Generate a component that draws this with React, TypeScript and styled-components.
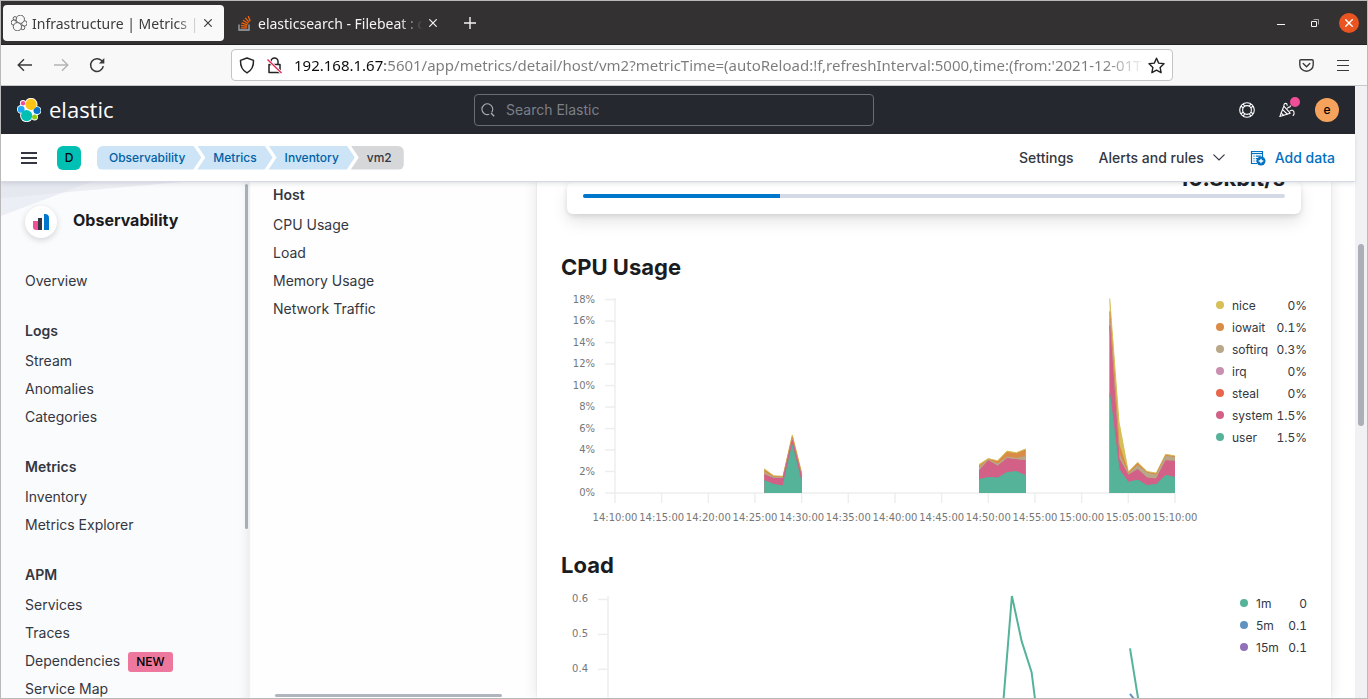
import React, { useLayoutEffect, useRef, useState } from "react";
import styled, { createGlobalStyle, css } from "styled-components";

const ui = `"Noto Sans", "Open Sans", sans-serif`;
const inter = `Inter, "Liberation Sans", sans-serif`;

const GlobalStyle = createGlobalStyle`
  * { box-sizing: border-box; }
  body { margin: 0; font-family: ${inter}; font-size: 14px; color: #343741; background: #fff; }
  button { font: inherit; color: inherit; background: none; border: 0; padding: 0; cursor: pointer; }
  a { color: inherit; text-decoration: none; }
  ul, h1, h2, h3 { margin: 0; padding: 0; list-style: none; }
  svg { display: block; flex: none; }
`;

/* ---------- browser window ---------- */

const Window = styled.div`
  display: flex;
  flex-direction: column;
  height: 100vh;
  border: 1px solid #b9b9b9;
  overflow: hidden;
`;

const TabStrip = styled.div`
  display: flex;
  align-items: center;
  flex: none;
  height: 44px;
  padding: 0 8px 0 2px;
  background: #333132;
  border-bottom: 1px solid #222;
  color: #f4f4f4;
`;

const Tab = styled.div<{ $active?: boolean }>`
  display: flex;
  align-items: center;
  gap: ${(p) => (p.$active ? 5 : 7)}px;
  width: ${(p) => (p.$active ? 221 : 225)}px;
  height: 36px;
  padding: 0 8px;
  border-radius: 4px;
  font-family: ${ui};
  font-size: 14px;
  ${(p) =>
    p.$active
      ? css`
          background: #f9f9f9;
          color: #3c3c3c;
        `
      : css`
          padding: 0 8px 0 14px;
        `}
`;

const TabTitle = styled.span`
  flex: 1;
  min-width: 0;
  padding-top: 2px;
  overflow: hidden;
  white-space: nowrap;
  mask-image: linear-gradient(to right, #000 calc(100% - 24px), transparent);
`;

const TabClose = styled.button`
  display: grid;
  place-items: center;
  width: 16px;
  height: 16px;
  margin-left: -5px;
`;

const NewTab = styled.button`
  margin-left: 15px;
`;

const WindowControls = styled.div`
  display: flex;
  align-items: center;
  gap: 26px;
  margin-left: auto;
`;

const CloseWindow = styled.button`
  display: grid;
  place-items: center;
  width: 20px;
  height: 20px;
  margin-left: -6px;
  border-radius: 50%;
  background: #e95420;
  color: #fff;
`;

const Toolbar = styled.div`
  display: flex;
  align-items: center;
  flex: none;
  height: 41px;
  padding: 0 18px 0 16px;
  background: #f8f8f8;
  border-bottom: 1px solid #c8c8c8;
  color: #3a3a3a;
`;

const ToolbarGroup = styled.div<{ $width: number; $gap: number; $end?: boolean }>`
  display: flex;
  align-items: center;
  justify-content: ${(p) => (p.$end ? "flex-end" : "flex-start")};
  gap: ${(p) => p.$gap}px;
  width: ${(p) => p.$width}px;
`;

const AddressBar = styled.div`
  display: flex;
  align-items: center;
  flex: 1;
  min-width: 0;
  height: 32px;
  padding: 0 7px;
  gap: 11px;
  background: #fff;
  border: 1px solid #c4c4c4;
  border-radius: 4px;
  color: #222;
`;

const AddressInput = styled.input`
  flex: 1;
  min-width: 0;
  height: 28px;
  margin-right: -8px;
  padding: 0;
  border: 0;
  outline: 0;
  font-family: ${ui};
  font-size: 15px;
  color: #7b7b7b;
  -webkit-text-fill-color: transparent;
  background: linear-gradient(to right, #0c0c0c 91px, #7b7b7b 91px);
  background-clip: text;
  -webkit-background-clip: text;
  mask-image: linear-gradient(to right, #000 calc(100% - 40px), transparent);
`;

const Viewport = styled.div`
  display: flex;
  flex: 1;
  min-height: 0;
`;

const PageScrollbar = styled.div`
  display: flex;
  justify-content: center;
  flex: none;
  width: 12px;
  padding-top: 158px;
  background: #f1f1f4;
`;

const PageThumb = styled.div`
  width: 6px;
  height: 182px;
  border-radius: 3px;
  background: #acaeb8;
`;

/* ---------- elastic chrome ---------- */

const Page = styled.div`
  display: flex;
  flex-direction: column;
  flex: 1;
  min-width: 0;
`;

const Header = styled.header`
  display: grid;
  grid-template-columns: 1fr 400px 1fr;
  align-items: center;
  flex: none;
  height: 48px;
  padding: 0 16px 0 8px;
  background: #25282f;
  color: #fff;
`;

const Brand = styled.a`
  display: flex;
  align-items: center;
  gap: 8px;
  margin-left: 8px;
  font-family: "Open Sans", "Noto Sans", sans-serif;
  font-size: 22px;
  line-height: 24px;

  span { padding-bottom: 2px; line-height: 22px; }
`;

const Search = styled.label`
  display: flex;
  align-items: center;
  gap: 11px;
  height: 32px;
  padding: 0 6px;
  border: 1px solid #6a6c72;
  border-radius: 4px;
  color: #a9abb1;

  input {
    flex: 1;
    min-width: 0;
    padding: 0 0 2px;
    border: 0;
    outline: 0;
    background: none;
    font: 14px ${inter};
    color: #fff;
  }
  input::placeholder { color: #7c7f87; opacity: 1; }
`;

const HeaderActions = styled.div`
  display: flex;
  align-items: center;
  justify-content: flex-end;
  gap: 20px;
`;

const IconButton = styled.button`
  position: relative;
  display: grid;
  place-items: center;
  width: 20px;
  height: 24px;
`;

const NewsDot = styled.span`
  position: absolute;
  top: -1px;
  right: -3px;
  width: 10px;
  height: 10px;
  border-radius: 50%;
  background: #f04e98;
`;

const Badge = styled.button<{ $round?: boolean }>`
  width: 24px;
  height: 24px;
  margin-left: ${(p) => (p.$round ? -2 : 0)}px;
  border-radius: ${(p) => (p.$round ? "50%" : "6px")};
  background: ${(p) => (p.$round ? "#f5a35c" : "#00bfb3")};
  color: #000;
  font-size: 12px;
  line-height: 24px;
  font-weight: 500;
`;

const SubHeader = styled.div`
  position: relative;
  z-index: 3;
  display: flex;
  align-items: center;
  flex: none;
  height: 48px;
  padding: 0 20px;
  background: #fff;
  border-bottom: 1px solid #d3dae6;
  box-shadow: 0 2px 4px rgba(80, 84, 100, 0.15);
  gap: 20px;
`;

const Breadcrumbs = styled.nav`
  display: flex;
  margin-left: -4px;
`;

const Crumb = styled.a<{ $first?: boolean; $last?: boolean }>`
  height: 24px;
  line-height: 24px;
  font-size: 12px;
  font-weight: 500;
  padding: 0 16px;
  background: #cce4f5;
  color: #0061a6;
  clip-path: polygon(0 0, calc(100% - 8px) 0, 100% 50%, calc(100% - 8px) 100%, 0 100%, 8px 50%);
  ${(p) =>
    !p.$first &&
    css`
      margin-left: -4px;
    `}
  ${(p) =>
    p.$first &&
    css`
      padding-left: 12px;
      border-radius: 6px 0 0 6px;
      clip-path: polygon(0 0, calc(100% - 8px) 0, 100% 50%, calc(100% - 8px) 100%, 0 100%);
    `}
  ${(p) =>
    p.$last &&
    css`
      padding-right: 12px;
      border-radius: 0 6px 6px 0;
      background: #d6d7d9;
      color: #343741;
      clip-path: polygon(0 0, 100% 0, 100% 100%, 0 100%, 8px 50%);
    `}
`;

const PageActions = styled.div`
  display: flex;
  align-items: center;
  gap: 25px;
  margin-left: auto;
  font-weight: 500;
`;

const PageAction = styled.button<{ $primary?: boolean }>`
  display: flex;
  align-items: center;
  gap: 9px;
  line-height: 20px;
  color: ${(p) => (p.$primary ? "#0071c2" : "#343741")};
`;

const Columns = styled.div`
  display: flex;
  flex: 1;
  min-height: 0;
  overflow: hidden;
`;

/* ---------- navigation ---------- */

const SideNav = styled.nav`
  position: relative;
  z-index: 1;
  flex: none;
  width: 248px;
  padding: 24px;
  background: #fafbfd;
  box-shadow: 0 0 2px rgba(0, 0, 0, 0.16), inset -12px 0 12px -12px rgba(0, 0, 0, 0.1);
  overflow: hidden;
`;

const NavPattern = styled.svg`
  position: absolute;
  top: 0;
  left: 0;
`;

const SolutionTitle = styled.div`
  position: relative;
  display: flex;
  gap: 16px;
  height: 32px;
  margin-bottom: 29px;

  h1 {
    font-size: 16px;
    line-height: 28px;
    font-weight: 700;
    color: #1a1c21;
  }
`;

const SolutionIcon = styled.div`
  display: grid;
  place-items: center;
  width: 32px;
  height: 32px;
  border-radius: 50%;
  background: #fff;
  box-shadow: 0 2px 6px rgba(0, 0, 0, 0.16);
`;

const NavGroup = styled.section`
  margin-bottom: 26px;
`;

const NavHeading = styled.h2`
  margin-bottom: 6px;
  font-size: 14px;
  line-height: 20px;
  font-weight: 600;
`;

const NavLink = styled.a`
  display: flex;
  align-items: center;
  gap: 8px;
  height: 28px;
  line-height: 20px;
`;

const NewBadge = styled.span`
  height: 20px;
  padding: 0 8px;
  margin-top: 2px;
  border-radius: 3px;
  background: #ee789d;
  color: #000;
  font-size: 12px;
  line-height: 20px;
  font-weight: 500;
`;

const NavThumb = styled.div`
  position: absolute;
  top: 2px;
  right: 1px;
  width: 3px;
  height: 345px;
  border-radius: 2px;
  background: #a9adb6;
`;

const SectionNav = styled.nav`
  position: relative;
  flex: none;
  width: 288px;
  padding: 3px 24px;
  background: #fefefe;
`;

const SectionThumb = styled.div`
  position: absolute;
  left: 26px;
  bottom: 1px;
  width: 227px;
  height: 3px;
  border-radius: 2px;
  background: #b0b4bc;
`;

/* ---------- metrics ---------- */

const Content = styled.main`
  position: relative;
  flex: 1;
  min-width: 0;
  margin-right: 24px;
  padding: 0 24px;
  background: #fff;
  box-shadow: 0 0 14px rgba(0, 0, 0, 0.11), 0 0 2px rgba(0, 0, 0, 0.1);
`;

const StatCard = styled.div`
  display: flex;
  flex-direction: column;
  justify-content: flex-end;
  height: 32px;
  margin: 0 6px 37px;
  padding: 0 16px 16px;
  border-radius: 6px;
  background: #fff;
  box-shadow: 0 8px 16px rgba(0, 0, 0, 0.1), 0 2px 5px rgba(0, 0, 0, 0.1);
`;

const StatValue = styled.strong`
  flex: none;
  text-align: right;
  font-size: 22px;
  line-height: 32px;
  font-weight: 700;
  color: #1a1c21;
`;

const Track = styled.div`
  flex: none;
  height: 4px;
  border-radius: 2px;
  background: #d3dae6;
  overflow: hidden;
`;

const Fill = styled.div`
  width: 28%;
  height: 100%;
  background: #0077cc;
`;

const ChartSection = styled.section`
  margin-bottom: 22px;

  h2 {
    font-size: 22px;
    line-height: 32px;
    font-weight: 700;
    color: #1a1c21;
  }
`;

const ChartRow = styled.div`
  display: flex;
  gap: 19px;
  margin-top: 7px;
`;

const Plot = styled.div`
  flex: 1;
  min-width: 0;

  text {
    font-family: "DejaVu Sans", sans-serif;
    font-size: 10px;
    fill: #777;
  }
`;

const Legend = styled.ul<{ $width: number }>`
  flex: none;
  width: ${(p) => p.$width}px;
  margin-top: 4px;
`;

const LegendItem = styled.li<{ $color: string }>`
  display: flex;
  align-items: center;
  height: 22px;
  font-size: 12px;

  &::before {
    content: "";
    flex: none;
    width: 8px;
    height: 8px;
    margin-right: 8px;
    border-radius: 50%;
    background: ${(p) => p.$color};
  }
  span {
    margin-left: auto;
    font-variant-numeric: tabular-nums;
  }
`;

type LegendEntry = { name: string; value: string; color: string };
type Run = { start: number; layers: number[][] };
type Line = { start: number; color: string; values: number[] };

const cpuLegend: LegendEntry[] = [
  { name: "nice", value: "0%", color: "#d6bf57" },
  { name: "iowait", value: "0.1%", color: "#da8b45" },
  { name: "softirq", value: "0.3%", color: "#b9a888" },
  { name: "irq", value: "0%", color: "#ca8eae" },
  { name: "steal", value: "0%", color: "#e7664c" },
  { name: "system", value: "1.5%", color: "#d36086" },
  { name: "user", value: "1.5%", color: "#54b399" },
];

const loadLegend: LegendEntry[] = [
  { name: "1m", value: "0", color: "#54b399" },
  { name: "5m", value: "0.1", color: "#6092c0" },
  { name: "15m", value: "0.1", color: "#9170b8" },
];

/* Cumulative tops, one list per layer, painted from the highest layer down. */
const layerColors = ["#d6bf57", "#da8b45", "#b9a888", "#d36086", "#54b399"];

const cpuRuns: Run[] = [
  {
    start: 16,
    layers: [
      [2.25, 1.6, 1.55, 5.4, 1.85],
      [2.15, 1.52, 1.48, 5.2, 1.72],
      [1.95, 1.45, 1.42, 5.0, 1.6],
      [1.7, 1.35, 1.35, 4.9, 1.45],
      [1.15, 0.8, 0.65, 4.45, 0.85],
    ],
  },
  {
    start: 39,
    layers: [
      [2.65, 3.2, 3.0, 3.9, 3.75, 4.1],
      [2.5, 3.12, 2.9, 3.78, 3.65, 4.0],
      [2.35, 3.08, 2.7, 3.35, 3.22, 3.4],
      [2.05, 3.0, 2.5, 3.2, 3.1, 3.0],
      [1.25, 1.45, 1.4, 1.9, 2.0, 1.6],
    ],
  },
  {
    start: 53,
    layers: [
      [18.1, 6.6, 1.95, 2.85, 2.0, 1.85, 3.6, 3.45],
      [16.9, 4.5, 1.85, 2.75, 1.92, 1.76, 3.5, 3.38],
      [16.2, 3.65, 1.78, 2.55, 1.85, 1.65, 3.4, 3.3],
      [15.6, 3.2, 1.65, 2.2, 1.4, 1.3, 3.0, 2.95],
      [9.25, 2.2, 1.0, 1.2, 0.7, 0.8, 1.65, 1.45],
    ],
  },
];

const loadLines: Line[] = [
  { start: 40, color: "#54b399", values: [0.26, 0.61, 0.48, 0.392, 0.17] },
  { start: 53, color: "#54b399", values: [0.46, 0.285] },
  { start: 53, color: "#6092c0", values: [0.33, 0.293] },
];

const minutesLabel = (m: number) =>
  `${14 + Math.floor((m + 10) / 60)}:${String((m + 10) % 60).padStart(2, "0")}:00`;

type TimeChartProps = {
  label: string;
  left: number;
  height: number;
  max: number;
  ticks: number[];
  format: (v: number) => string;
  runs?: Run[];
  lines?: Line[];
};

function TimeChart({ label, left, height, max, ticks, format, runs = [], lines = [] }: TimeChartProps) {
  const ref = useRef<HTMLDivElement>(null);
  const [width, setWidth] = useState(636);

  useLayoutEffect(() => {
    const el = ref.current;
    if (!el) return;
    const measure = () => setWidth(el.clientWidth);
    measure();
    const observer = new ResizeObserver(measure);
    observer.observe(el);
    return () => observer.disconnect();
  }, []);

  const top = 8;
  const bottom = top + height;
  const right = width - 22;
  const x = (m: number) => left + ((right - left) * m) / 60;
  const y = (v: number) => bottom - (v / max) * height;
  const path = (start: number, values: number[]) =>
    values.map((v, i) => `${i ? "L" : "M"}${x(start + i).toFixed(1)} ${y(v).toFixed(1)}`).join("");

  return (
    <Plot ref={ref}>
      <svg width={width} height={bottom + 34} role="img" aria-label={label}>
        <g stroke="#eeeeef" strokeWidth="1.5">
          <path d={`M${left} ${top}V${bottom}H${right}`} fill="none" />
          {ticks.map((t) => (
            <path key={t} d={`M${left - 10} ${y(t)}H${left}`} />
          ))}
          {Array.from({ length: 13 }, (_, i) => (
            <path key={i} d={`M${x(i * 5)} ${bottom}v10`} />
          ))}
        </g>
        {ticks.map((t) => (
          <text key={t} x={left - 20} y={y(t) + 3} textAnchor="end">
            {format(t)}
          </text>
        ))}
        {Array.from({ length: 13 }, (_, i) => (
          <text key={i} x={x(i * 5)} y={bottom + 28} textAnchor="middle">
            {minutesLabel(i * 5)}
          </text>
        ))}
        {runs.map((run) =>
          run.layers.map((values, i) => (
            <g key={`${run.start}-${i}`}>
              <path
                d={`${path(run.start, values)}V${bottom}H${x(run.start)}Z`}
                fill={layerColors[i]}
              />
              <path d={path(run.start, values)} fill="none" stroke={layerColors[i]} />
            </g>
          ))
        )}
        {lines.map((line, i) => (
          <path key={i} d={path(line.start, line.values)} fill="none" stroke={line.color} strokeWidth="2" />
        ))}
      </svg>
    </Plot>
  );
}

function ChartLegend({ items, width }: { items: LegendEntry[]; width: number }) {
  return (
    <Legend $width={width}>
      {items.map((i) => (
        <LegendItem key={i.name} $color={i.color}>
          {i.name}
          <span>{i.value}</span>
        </LegendItem>
      ))}
    </Legend>
  );
}

/* ---------- icons ---------- */

const Cross = ({ size = 8, weight = 1.2 }: { size?: number; weight?: number }) => (
  <svg width={size} height={size} viewBox="0 0 8 8" stroke="currentColor" strokeWidth={weight}>
    <path d="M0.3 0.3l7.4 7.4M7.7 0.3L0.3 7.7" />
  </svg>
);

const clusterDots: [number, number, number, string][] = [
  [6, 5.2, 2.3, "#f04e98"],
  [4.2, 11.4, 3.5, "#1ba9f5"],
  [20, 12.6, 3.6, "#0077cc"],
  [17.6, 19, 2.6, "#93c90e"],
  [14, 6.4, 5.7, "#fec514"],
  [9.6, 17.6, 5.7, "#00bfb3"],
];

const ElasticLogo = () => (
  <svg width="24" height="24" viewBox="0 0 24 24">
    {clusterDots.map(([cx, cy, r]) => (
      <circle key={cx} cx={cx} cy={cy} r={r + 0.8} fill="#fff" />
    ))}
    <path d="M6 6h12v12H6z" fill="#fff" />
    {clusterDots.map(([cx, cy, r, fill]) => (
      <circle key={cx} cx={cx} cy={cy} r={r - 0.1} fill={fill} />
    ))}
  </svg>
);

const ElasticOutline = () => (
  <svg width="16" height="16" viewBox="0 0 24 24" fill="#f9f9f9" stroke="#555" strokeWidth="1.4">
    {clusterDots.map(([cx, cy, r]) => (
      <circle key={cx} cx={cx} cy={cy} r={r + 0.5} />
    ))}
  </svg>
);

const StackOverflow = () => (
  <svg width="13" height="16" viewBox="0 0 13 16" fill="none">
    <path d="M1 9.5V15h10V9.5" stroke="#9fa6ad" strokeWidth="1.3" />
    <path
      d="M2.8 12.8h6.4M2.9 10.4l6.3.9M3.5 7.8l6 2M4.9 5.2l5.3 3.3M7.2 2.9l4 4.5M10.2 1l2 5.2"
      stroke="#f2640c"
      strokeWidth="1.3"
    />
  </svg>
);

const Arrow = ({ back }: { back?: boolean }) => (
  <svg width="16" height="14" viewBox="0 0 16 14" fill="none" stroke={back ? "#3a3a3a" : "#b4b4b4"} strokeWidth="1.4">
    {back ? <path d="M15 7H1.5M7 1.2L1.2 7 7 12.8" /> : <path d="M1 7h13.5M9 1.2L14.8 7 9 12.8" />}
  </svg>
);

const Reload = () => (
  <svg width="16" height="16" viewBox="0 0 16 16" fill="none" stroke="currentColor" strokeWidth="1.5">
    <path d="M14.3 9.2A6.4 6.4 0 1 1 12.6 3.6L14 5" />
    <path d="M15.3 1v5.4H9.9z" fill="currentColor" stroke="none" />
  </svg>
);

const Shield = () => (
  <svg width="16" height="17" viewBox="0 0 16 17" fill="none" stroke="currentColor" strokeWidth="1.5">
    <path d="M8 1l6.5 2.4c.2 5.6-1.6 9.9-6.5 12.5C3.1 13.3 1.3 9 1.5 3.4z" strokeLinejoin="round" />
  </svg>
);

const InsecureLock = () => (
  <svg width="17" height="17" viewBox="0 0 16 17" fill="none">
    <path d="M4.5 7V4.6a3.5 3.5 0 0 1 7 0V7M2.5 7.5h11v8h-11z" stroke="#222" strokeWidth="1.5" strokeLinejoin="round" />
    <path d="M1 2.5L15 16" stroke="#fff" strokeWidth="3" />
    <path d="M1 2.5L15 16" stroke="#e22850" strokeWidth="1.4" />
  </svg>
);

const Star = () => (
  <svg width="17" height="17" viewBox="0 0 17 17" fill="none" stroke="currentColor" strokeWidth="1.4" strokeLinejoin="round">
    <path d="M8.5 1.2l2.2 4.9 5.3.6-3.9 3.7 1 5.3-4.6-2.6-4.6 2.6 1-5.3L1 6.7l5.3-.6z" />
  </svg>
);

const Pocket = () => (
  <svg width="15" height="13" viewBox="0 0 15 13" fill="none" stroke="currentColor" strokeWidth="1.4">
    <path d="M2 .8h11q1.2 0 1.2 1.2v3.7a6.7 6.5 0 0 1-13.4 0V2Q.8.8 2 .8z" />
    <path d="M4.2 4.6l3.3 3.1 3.3-3.1" strokeLinecap="round" />
  </svg>
);

const Bars = ({ size, weight, gap }: { size: number; weight: number; gap: number }) => (
  <svg width={size} height={weight + gap * 2} fill="currentColor">
    {[0, 1, 2].map((i) => (
      <rect key={i} y={i * gap} width={size} height={weight} />
    ))}
  </svg>
);

const SearchIcon = () => (
  <svg width="14" height="14" viewBox="0 0 14 14" fill="none" stroke="currentColor" strokeWidth="1.1">
    <path d="M8.2 11.3A5.4 5.4 0 1 1 10.7 9.4" />
    <path d="M10 10l3.2 3.2" strokeWidth="1.4" />
  </svg>
);

const HelpIcon = () => (
  <svg width="16" height="16" viewBox="0 0 16 16" fill="none" stroke="#fff" strokeWidth="1.1">
    <circle cx="8" cy="8" r="7.3" />
    <circle cx="8" cy="8" r="4.4" />
    <path d="M1.9 4.2l2.3 1.5M4.2 1.9l1.5 2.3M14.1 4.2l-2.3 1.5M11.8 1.9l-1.5 2.3M1.9 11.8l2.3-1.5M4.2 14.1l1.5-2.3M14.1 11.8l-2.3-1.5M11.8 14.1l-1.5-2.3" />
  </svg>
);

const CheerIcon = () => (
  <svg width="16" height="16" viewBox="0 0 16 16" fill="none" stroke="#fff" strokeWidth="1.1" strokeLinejoin="round" strokeLinecap="round">
    <path d="M4.8 4.2L.8 14.6l10.4-3.4z" />
    <path d="M3.6 7.6l4.6 4.4M2.2 11l2.4 2.3" />
    <path d="M4.9 3.2C5 .9 8 .6 8.2 3.2M8.6 6.3c.2-1 .8-1.3 1.7-1.2.9 0 1.2-.6 1-1.4M11 9c1-1.2 4.4-1.4 4.1 2.6-.1.9-.5 1.5-1 1.9" />
  </svg>
);

const ChevronDown = () => (
  <svg width="12" height="7" viewBox="0 0 12 7" fill="none" stroke="currentColor" strokeWidth="1.2" strokeLinecap="round">
    <path d="M.8.8L6 6 11.2.8" />
  </svg>
);

const AddDataIcon = () => (
  <svg width="16" height="16" viewBox="0 0 16 16" fill="none" stroke="#0071c2">
    <path d="M7 13.5H1.5v-12h11V7" strokeWidth="1.2" />
    <path d="M1 3.5h12" strokeWidth="1.2" />
    <path d="M3.5 6.2h1M3.5 8.6h1M3.5 11h1M5.8 6.2h5M5.8 8.6h2.5M5.8 11h1" strokeWidth="1.2" />
    <circle cx="11" cy="11" r="4.5" fill="#0071c2" stroke="none" />
    <path d="M11 8.7v4.6M8.7 11h4.6" stroke="#fff" strokeWidth="1.3" />
  </svg>
);

const ObservabilityLogo = () => (
  <svg width="16" height="16" viewBox="0 0 16 16">
    <path d="M0 7h5v9H3a3 3 0 0 1-3-3z" fill="#f04e98" />
    <path d="M5 4h4v12H5z" fill="#343741" />
    <path d="M11 0h1a4 4 0 0 1 4 4v12h-5z" fill="#0077cc" />
  </svg>
);

/* ---------- page ---------- */

const navGroups = [
  { title: "Logs", items: ["Stream", "Anomalies", "Categories"] },
  { title: "Metrics", items: ["Inventory", "Metrics Explorer"] },
  { title: "APM", items: ["Services", "Traces", "Dependencies", "Service Map"] },
];

const url =
  "192.168.1.67:5601/app/metrics/detail/host/vm2?metricTime=(autoReload:!f,refreshInterval:5000,time:(from:'2021-12-01T";

export default function App() {
  return (
    <Window>
      <GlobalStyle />
      <TabStrip>
        <Tab $active>
          <ElasticOutline />
          <TabTitle>Infrastructure | Metrics | v</TabTitle>
          <TabClose aria-label="Close tab"><Cross /></TabClose>
        </Tab>
        <Tab>
          <StackOverflow />
          <TabTitle>elasticsearch - Filebeat : c</TabTitle>
          <TabClose aria-label="Close tab"><Cross /></TabClose>
        </Tab>
        <NewTab aria-label="New tab">
          <svg width="12" height="12" stroke="currentColor" strokeWidth="1.4"><path d="M6 0v12M0 6h12" /></svg>
        </NewTab>
        <WindowControls>
          <button aria-label="Minimize">
            <svg width="8" height="8" stroke="currentColor"><path d="M0 5.5h8" /></svg>
          </button>
          <button aria-label="Restore">
            <svg width="8" height="8" fill="none" stroke="currentColor">
              <path d="M.5 2.5h5v5h-5z" />
              <path d="M2.5.5h5v5" opacity="0.6" />
            </svg>
          </button>
          <CloseWindow aria-label="Close window"><Cross weight={1.4} /></CloseWindow>
        </WindowControls>
      </TabStrip>

      <Toolbar>
        <ToolbarGroup $width={214} $gap={20}>
          <button aria-label="Back"><Arrow back /></button>
          <button aria-label="Forward"><Arrow /></button>
          <button aria-label="Reload"><Reload /></button>
        </ToolbarGroup>
        <AddressBar>
          <Shield />
          <InsecureLock />
          <AddressInput aria-label="Address" defaultValue={url} />
          <button aria-label="Bookmark"><Star /></button>
        </AddressBar>
        <ToolbarGroup $width={176} $gap={23} $end>
          <button aria-label="Pocket"><Pocket /></button>
          <button aria-label="Menu"><Bars size={12} weight={1} gap={5} /></button>
        </ToolbarGroup>
      </Toolbar>

      <Viewport>
        <Page>
          <Header>
            <Brand href="#"><ElasticLogo /><span>elastic</span></Brand>
            <Search>
              <SearchIcon />
              <input type="search" placeholder="Search Elastic" aria-label="Search Elastic" />
            </Search>
            <HeaderActions>
              <IconButton aria-label="Help"><HelpIcon /></IconButton>
              <IconButton aria-label="News"><CheerIcon /><NewsDot /></IconButton>
              <Badge $round>e</Badge>
            </HeaderActions>
          </Header>

          <SubHeader>
            <button aria-label="Toggle navigation"><Bars size={16} weight={2} gap={5} /></button>
            <Badge>D</Badge>
            <Breadcrumbs aria-label="Breadcrumbs">
              <Crumb href="#" $first>Observability</Crumb>
              <Crumb href="#">Metrics</Crumb>
              <Crumb href="#">Inventory</Crumb>
              <Crumb as="span" $last>vm2</Crumb>
            </Breadcrumbs>
            <PageActions>
              <PageAction>Settings</PageAction>
              <PageAction>Alerts and rules<ChevronDown /></PageAction>
              <PageAction $primary><AddDataIcon />Add data</PageAction>
            </PageActions>
          </SubHeader>

          <Columns>
            <SideNav aria-label="Observability">
              <NavPattern width="180" height="36">
                <path d="M0 0H90L0 34z" fill="#eceef5" />
                <path d="M0 0H180L0 16z" fill="#dfe2ec" fillOpacity="0.5" />
              </NavPattern>
              <SolutionTitle>
                <SolutionIcon><ObservabilityLogo /></SolutionIcon>
                <h1>Observability</h1>
              </SolutionTitle>
              <NavGroup><NavLink href="#">Overview</NavLink></NavGroup>
              {navGroups.map((g) => (
                <NavGroup key={g.title}>
                  <NavHeading>{g.title}</NavHeading>
                  {g.items.map((item) => (
                    <NavLink href="#" key={item}>
                      {item}
                      {item === "Dependencies" && <NewBadge>NEW</NewBadge>}
                    </NavLink>
                  ))}
                </NavGroup>
              ))}
              <NavThumb />
            </SideNav>

            <SectionNav aria-label="Host">
              <NavHeading>Host</NavHeading>
              {["CPU Usage", "Load", "Memory Usage", "Network Traffic"].map((item) => (
                <NavLink href="#" key={item}>{item}</NavLink>
              ))}
              <SectionThumb />
            </SectionNav>

            <Content>
              <StatCard>
                <StatValue>10.8kbit/s</StatValue>
                <Track><Fill /></Track>
              </StatCard>
              <ChartSection>
                <h2>CPU Usage</h2>
                <ChartRow>
                  <TimeChart
                    label="CPU usage over time"
                    left={54}
                    height={195}
                    max={18.15}
                    ticks={[0, 2, 4, 6, 8, 10, 12, 14, 16, 18]}
                    format={(v) => `${v}%`}
                    runs={cpuRuns}
                  />
                  <ChartLegend items={cpuLegend} width={91} />
                </ChartRow>
              </ChartSection>
              <ChartSection>
                <h2>Load</h2>
                <ChartRow>
                  <TimeChart
                    label="Load over time"
                    left={47}
                    height={213}
                    max={0.61}
                    ticks={[0.4, 0.5, 0.6]}
                    format={(v) => v.toFixed(1)}
                    lines={loadLines}
                  />
                  <ChartLegend items={loadLegend} width={67} />
                </ChartRow>
              </ChartSection>
            </Content>
          </Columns>
        </Page>
        <PageScrollbar><PageThumb /></PageScrollbar>
      </Viewport>
    </Window>
  );
}
